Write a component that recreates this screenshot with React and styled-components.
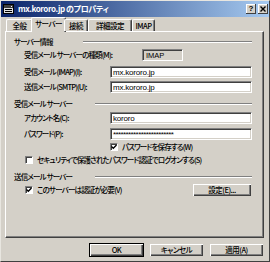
import React from 'react';
import styled, { createGlobalStyle } from 'styled-components';

const GlobalStyle = createGlobalStyle`
  html, body { margin: 0; padding: 0; background: #d4d0c8; }
  body {
    font-family: "Noto Sans CJK JP", "Noto Sans", sans-serif;
    font-size: 7.5px;
    font-weight: 500;
    font-feature-settings: "palt";
    letter-spacing: -0.85px;
    color: #000;
  }
  * { box-sizing: border-box; }
`;

const Window = styled.div`
  width: 270px;
  height: 262px;
  background: #d4d0c8;
  border: 1px solid;
  border-color: #e8e6e0 #404040 #404040 #e8e6e0;
  display: flex;
  flex-direction: column;
`;

const TitleBar = styled.div`
  height: 16px;
  flex: none;
  display: flex;
  align-items: center;
  padding: 0 1px 0 2px;
  background: linear-gradient(to right, #0a246a, #a6caf0);
`;

const TitleText = styled.span`
  color: #fff;
  font-weight: bold;
  font-size: 8px;
  letter-spacing: -0.4px;
  margin-left: 3px;
  line-height: 10px;
  white-space: nowrap;
`;

const CaptionButtons = styled.div`
  margin-left: auto;
  display: flex;
  gap: 2px;
`;

const CaptionButton = styled.div`
  width: 10px;
  height: 10px;
  background: #d4d0c8;
  box-shadow: inset -1px -1px #404040, inset 1px 1px #fff;
  display: flex;
  align-items: center;
  justify-content: center;
  font-family: "Liberation Sans", sans-serif;
  font-weight: bold;
  font-size: 8px;
  letter-spacing: 0;
  line-height: 8px;
`;

const Body = styled.div`
  flex: 1;
  display: flex;
  flex-direction: column;
  padding: 0 5px 0 4px;
`;

const TabStrip = styled.div`
  height: 14px;
  flex: none;
  display: flex;
  align-items: flex-end;
  padding-left: 1px;
  position: relative;
  z-index: 1;
`;

const Tab = styled.div`
  width: ${p => p.$w}px;
  height: ${p => (p.$active ? 15 : 12)}px;
  margin: 0 ${p => (p.$active ? -2 : 0)}px ${p => (p.$active ? -1 : 0)}px;
  background: #d4d0c8;
  border-top: 1px solid #fff;
  border-left: 1px solid #fff;
  border-right: 1px solid #404040;
  border-radius: 2px 2px 0 0;
  box-shadow: inset -1px 0 #808080;
  display: flex;
  align-items: ${p => (p.$active ? 'flex-start' : 'center')};
  padding-top: ${p => (p.$active ? 1 : 0)}px;
  justify-content: center;
  line-height: 10px;
  letter-spacing: -0.5px;
  white-space: nowrap;
`;

const Panel = styled.div`
  height: 207px;
  flex: none;
  border: 1px solid;
  border-color: #fff #404040 #404040 #fff;
  box-shadow: inset -1px -1px #808080;
  padding: 5px 11px 0 8px;
  display: flex;
  flex-direction: column;
`;

const GroupHeader = styled.div`
  display: grid;
  grid-template-columns: ${p => p.$lineStart}px 1fr;
  align-items: center;
  height: 10px;
  line-height: 10px;
  margin-top: ${p => p.$mt || 0}px;
  white-space: nowrap;
`;

const EtchedLine = styled.div`
  height: 2px;
  border-top: 1px solid #808080;
  border-bottom: 1px solid #fff;
`;

const TypeRow = styled.div`
  display: flex;
  align-items: center;
  height: 12px;
  padding-left: 10px;
  margin-top: ${p => p.$mt || 0}px;
`;

const FieldRow = styled.div`
  display: grid;
  grid-template-columns: 86px 1fr;
  align-items: center;
  height: 12px;
  padding-left: 10px;
  margin-top: ${p => p.$mt || 0}px;
`;

const Label = styled.span`
  line-height: 10px;
  white-space: nowrap;
  width: ${p => (p.$w ? `${p.$w}px` : 'auto')};
  flex: none;
`;

const StaticBox = styled.div`
  width: 41px;
  height: 12px;
  border-top: 1px solid #808080;
  border-left: 1px solid #808080;
  border-right: 1px solid #fff;
  border-bottom: 1px solid #fff;
  box-shadow: inset 1px 1px #404040;
  padding: 1px 0 0 3px;
  line-height: 9px;
  font-family: "Liberation Sans", sans-serif;
  font-size: 7.5px;
  letter-spacing: 0;
`;

const TextInput = styled.input`
  height: 12px;
  width: 100%;
  margin: 0;
  border-top: 1px solid #808080;
  border-left: 1px solid #808080;
  border-right: 1px solid #fff;
  border-bottom: 1px solid #fff;
  box-shadow: inset 1px 1px #404040, inset -1px -1px #d4d0c8;
  background: #fff;
  padding: 0 2px;
  font-family: "Liberation Sans", sans-serif;
  font-size: 8px;
  letter-spacing: ${p => (p.$mask ? '-0.6px' : '-0.2px')};
  line-height: 10px;
  color: #000;
  outline: none;
`;

const CheckRow = styled.div`
  display: flex;
  align-items: center;
  height: ${p => p.$h || 10}px;
  padding-left: ${p => p.$indent}px;
  margin-top: ${p => p.$mt || 0}px;
`;

const CheckBox = styled.span`
  width: 8px;
  height: 8px;
  flex: none;
  background: #fff;
  border-top: 1px solid #808080;
  border-left: 1px solid #808080;
  border-right: 1px solid #fff;
  border-bottom: 1px solid #fff;
  box-shadow: inset 1px 1px #404040;
  margin-right: 4px;
  display: flex;
  align-items: center;
  justify-content: center;
`;

const Button = styled.div`
  width: ${p => p.$w}px;
  height: 14px;
  background: #d4d0c8;
  border: 1px solid ${p => (p.$default ? '#000' : 'transparent')};
  box-shadow: inset 1px 1px #fff, inset -1px -1px #404040, inset -2px -2px #808080;
  display: flex;
  align-items: center;
  justify-content: center;
  line-height: 10px;
  letter-spacing: -0.5px;
  white-space: nowrap;
  flex: none;
`;

const Spacer = styled.div`
  flex: 1;
`;

const ButtonRow = styled.div`
  display: flex;
  justify-content: flex-end;
  gap: 5px;
  margin-top: 5px;
`;

const Check = () => (
  <svg width="6" height="6" viewBox="0 0 6 6">
    <path d="M0.5 2.5 L2.3 4.3 L5.5 1" stroke="#000" strokeWidth="1.3" fill="none" />
  </svg>
);

const TitleIcon = () => (
  <svg width="12" height="11" viewBox="0 0 12 11">
    <rect x="0.5" y="0.5" width="10" height="9" fill="#e0e0e0" stroke="#000" />
    <rect x="1" y="1" width="9" height="3" fill="#404040" />
    <rect x="2" y="5" width="7" height="1" fill="#000" />
    <rect x="2" y="7" width="7" height="1" fill="#000" />
    <rect x="8" y="2" width="1" height="1" fill="#fff" />
  </svg>
);

const CloseGlyph = () => (
  <svg width="6" height="6" viewBox="0 0 6 6">
    <path d="M0.5 0.5 L5.5 5.5 M5.5 0.5 L0.5 5.5" stroke="#000" strokeWidth="1.4" />
  </svg>
);

const tabs = [
  { label: '全般', w: 27 },
  { label: 'サーバー', w: 35, active: true },
  { label: '接続', w: 24 },
  { label: '詳細設定', w: 44 },
  { label: 'IMAP', w: 23 },
];

export default function App() {
  return (
    <>
      <GlobalStyle />
      <Window>
        <TitleBar>
          <TitleIcon />
          <TitleText>mx.kororo.jp のプロパティ</TitleText>
          <CaptionButtons>
            <CaptionButton>?</CaptionButton>
            <CaptionButton><CloseGlyph /></CaptionButton>
          </CaptionButtons>
        </TitleBar>
        <Body>
          <TabStrip>
            {tabs.map(t => (
              <Tab key={t.label} $w={t.w} $active={t.active}>{t.label}</Tab>
            ))}
          </TabStrip>
          <Panel>
            <GroupHeader $lineStart={69}>
              <span>サーバー情報</span>
              <EtchedLine />
            </GroupHeader>
            <TypeRow $mt={2}>
              <Label $w={118}>受信メール サーバーの種類(M):</Label>
              <StaticBox>IMAP</StaticBox>
            </TypeRow>
            <FieldRow $mt={5}>
              <Label>受信メール (IMAP)(I):</Label>
              <TextInput readOnly value="mx.kororo.jp" />
            </FieldRow>
            <FieldRow $mt={3}>
              <Label>送信メール (SMTP)(U):</Label>
              <TextInput readOnly value="mx.kororo.jp" />
            </FieldRow>
            <GroupHeader $lineStart={81} $mt={6}>
              <span>受信メール サーバー</span>
              <EtchedLine />
            </GroupHeader>
            <FieldRow $mt={3}>
              <Label>アカウント名(C):</Label>
              <TextInput readOnly value="kororo" />
            </FieldRow>
            <FieldRow $mt={4}>
              <Label>パスワード(P):</Label>
              <TextInput readOnly $mask value="************************" />
            </FieldRow>
            <CheckRow $indent={96} $mt={2}>
              <CheckBox><Check /></CheckBox>
              <Label>パスワードを保存する(W)</Label>
            </CheckRow>
            <CheckRow $indent={11} $mt={3}>
              <CheckBox />
              <Label>セキュリティで保護されたパスワード認証でログオンする(S)</Label>
            </CheckRow>
            <GroupHeader $lineStart={81} $mt={7}>
              <span>送信メール サーバー</span>
              <EtchedLine />
            </GroupHeader>
            <CheckRow $indent={11} $mt={1} $h={14}>
              <CheckBox><Check /></CheckBox>
              <Label>このサーバーは認証が必要(V)</Label>
              <Spacer />
              <Button $w={60}>設定(E)...</Button>
            </CheckRow>
          </Panel>
          <ButtonRow>
            <Button $w={55} $default>OK</Button>
            <Button $w={55}>キャンセル</Button>
            <Button $w={55}>適用(A)</Button>
          </ButtonRow>
        </Body>
      </Window>
    </>
  );
}
